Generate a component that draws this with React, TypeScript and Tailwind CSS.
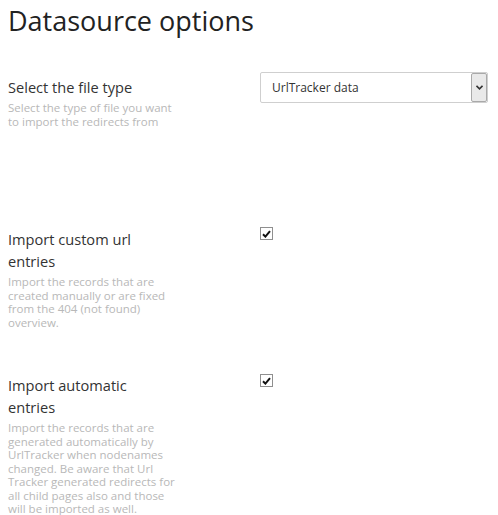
import React from 'react';

const Check = () => (
  <div className="w-[13px] h-[13px] border border-[#8f8f8f] bg-white flex items-center justify-center">
    <svg width="9" height="8" viewBox="0 0 9 8">
      <path d="M1 4.2 L3.4 6.6 L8 1.2" fill="none" stroke="#111" strokeWidth="2" />
    </svg>
  </div>
);

const Row = ({ label, desc, children, className }: { label: string; desc: string; children: React.ReactNode; className?: string }) => (
  <div className={`flex ${className ?? ''}`}>
    <div className="w-[176px] shrink-0">
      <h4 className="w-[150px] text-[14.6px] leading-[22px] text-[#333]">{label}</h4>
      <p className="mt-[3px] w-[172px] text-[11.5px] leading-[13.5px] text-[#b8b8b8]">{desc}</p>
    </div>
    <div className="ml-[76px] flex-1">{children}</div>
  </div>
);

export default function App() {
  return (
    <div className="bg-white w-[498px] h-[515px] overflow-hidden pl-[8px] pr-[10px] pt-[3px] font-['Open_Sans',sans-serif]">
      <h1 className="text-[27px] leading-[36px] text-[#222]">Datasource options</h1>

      <Row className="mt-[37px]" label="Select the file type" desc="Select the type of file you want to import the redirects from">
        <div className="mt-[-4px] h-[31px] flex items-stretch border border-[#cfcfcf] rounded-[2px] bg-white">
          <span className="flex-1 flex items-center pl-[11px] text-[12px] text-[#333]">UrlTracker data</span>
          <span className="w-[16px] flex items-center justify-center bg-[#e9e9e9] border border-[#a9a9a9] rounded-[2px]">
            <svg width="7" height="5" viewBox="0 0 7 5">
              <path d="M0.5 0.8 L3.5 3.8 L6.5 0.8" fill="none" stroke="#333" strokeWidth="1.6" />
            </svg>
          </span>
        </div>
      </Row>

      <Row className="mt-[100px]" label="Import custom url entries" desc="Import the records that are created manually or are fixed from the 404 (not found) overview.">
        <div className="mt-[-1px]">
          <Check />
        </div>
      </Row>

      <Row className="mt-[45px]" label="Import automatic entries" desc="Import the records that are generated automatically by UrlTracker when nodenames changed. Be aware that Url Tracker generated redirects for all child pages also and those will be imported as well.">
        <Check />
      </Row>
    </div>
  );
}
